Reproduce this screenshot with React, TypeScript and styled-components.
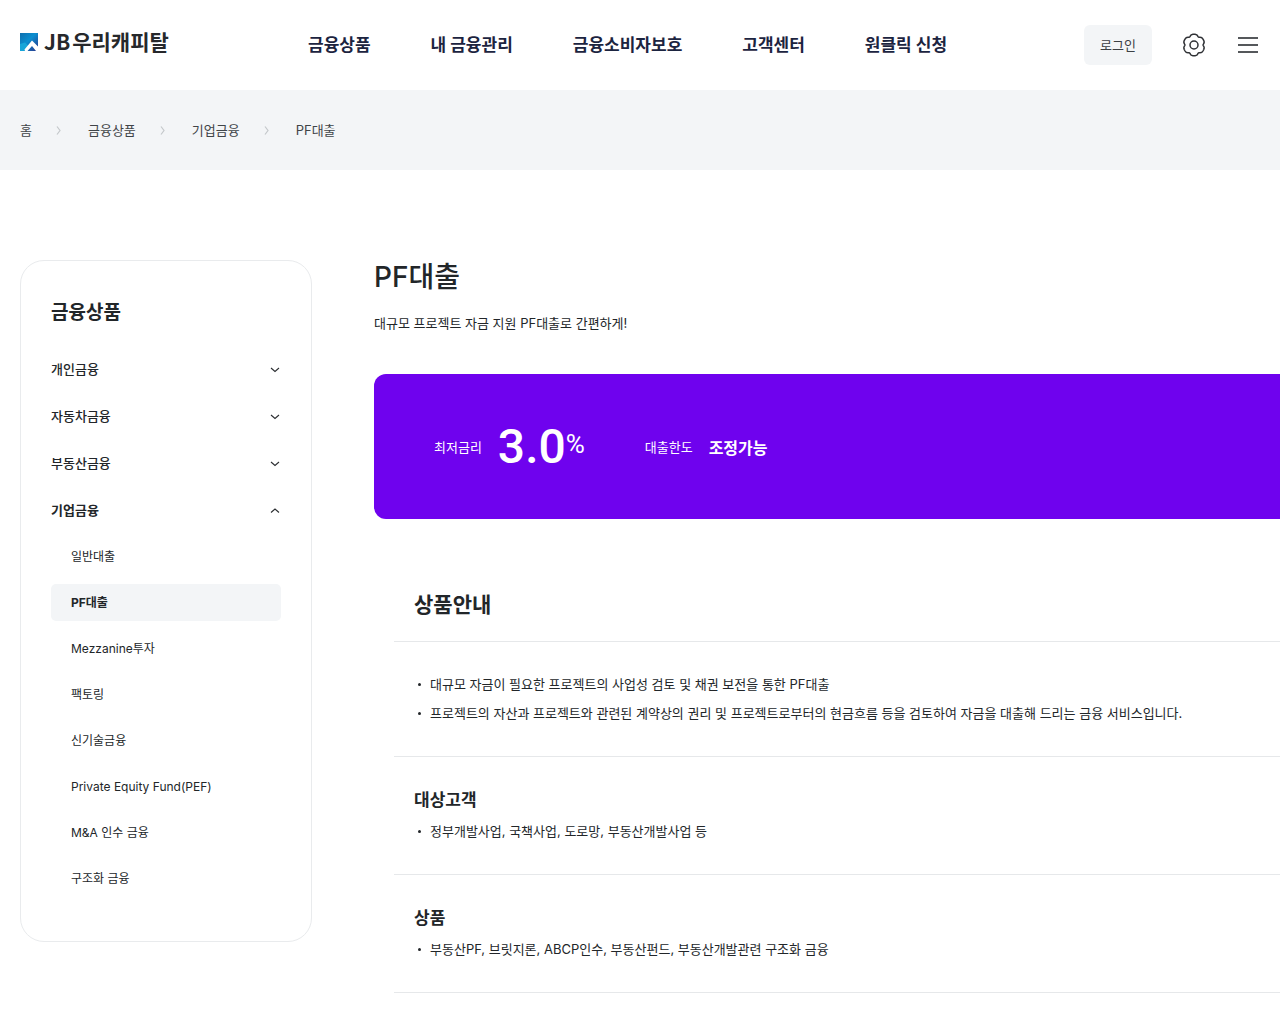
import React, { useState } from "react";
import styled, { createGlobalStyle } from "styled-components";

const GlobalStyle = createGlobalStyle`
  *, *::before, *::after { box-sizing: border-box; }
  body {
    margin: 0;
    background: #fff;
    color: #222629;
    font-family: Inter, "Noto Sans CJK KR", sans-serif;
    font-size: 13px;
    overflow-x: hidden;
  }
  h1, h2, h3, p, ul, ol, dl, dd { margin: 0; padding: 0; }
  ul, ol { list-style: none; }
  a { color: inherit; text-decoration: none; }
  button { border: 0; padding: 0; background: none; color: inherit; font: inherit; cursor: pointer; }
`;

const Header = styled.header`
  display: flex;
  align-items: center;
  height: 90px;
  padding: 0 20px;
`;

const LogoLink = styled.a`
  display: flex;
  align-items: center;
  gap: 6px;
  flex: 0 0 288px;
  padding-bottom: 6px;
  color: #26282b;
  font-size: 21px;
  font-weight: 700;
  line-height: 28px;
`;

const LogoLatin = styled.span`
  margin-right: 2px;
  font-family: "Noto Sans CJK KR", sans-serif;
`;

const GlobalNav = styled.nav`
  flex: 1;
`;

const GlobalNavList = styled.ul`
  display: flex;
  gap: 60px;
  color: #1c2440;
  font-size: 17px;
  font-weight: 700;
  line-height: 24px;
  white-space: nowrap;
`;

const HeaderTools = styled.div`
  display: flex;
  align-items: center;
  gap: 30px;
`;

const LoginButton = styled.button`
  width: 68px;
  height: 40px;
  padding-bottom: 2px;
  border-radius: 6px;
  background: #f3f5f7;
  color: #3c4044;
`;

const IconButton = styled.button`
  display: flex;
  width: 24px;
  height: 24px;
`;

const Breadcrumb = styled.nav`
  display: flex;
  align-items: center;
  height: 80px;
  padding: 0 20px;
  background: #f3f5f7;
  color: #3f4448;
`;

const BreadcrumbList = styled.ol`
  display: flex;
  gap: 24px;
  line-height: 20px;
`;

const BreadcrumbItem = styled.li`
  display: flex;
  align-items: center;
  gap: 24px;
`;

const Main = styled.main`
  display: flex;
  align-items: flex-start;
  gap: 62px;
  padding: 90px 0 60px 20px;
`;

const Sidebar = styled.aside`
  flex: 0 0 292px;
  padding: 38px 30px 44px;
  border: 1px solid #e9ebed;
  border-radius: 24px;
`;

const SidebarTitle = styled.h2`
  margin-bottom: 18px;
  font-size: 19px;
  font-weight: 700;
  line-height: 28px;
`;

const GroupButton = styled.button<{ $open: boolean }>`
  display: flex;
  align-items: center;
  justify-content: space-between;
  width: 100%;
  height: 47px;
  padding-right: 1px;
  font-weight: ${(p) => (p.$open ? 700 : 500)};
`;

const SubList = styled.ul`
  display: grid;
  gap: 9px;
  padding-top: 5px;
`;

const SubLink = styled.a<{ $current: boolean }>`
  display: block;
  padding: 0 20px;
  border-radius: 5px;
  background: ${(p) => (p.$current ? "#f3f5f7" : "transparent")};
  font-size: 12px;
  font-weight: ${(p) => (p.$current ? 700 : 400)};
  line-height: 37px;
`;

const Content = styled.article`
  flex: 1 0 946px;
`;

const PageTitle = styled.h1`
  font-size: 28px;
  font-weight: 500;
  line-height: 34px;
`;

const PageLead = styled.p`
  margin: 19px 0 41px;
  line-height: 20px;
`;

const Banner = styled.dl`
  display: flex;
  align-items: center;
  gap: 60px;
  height: 145px;
  padding: 0 60px;
  border-radius: 12px;
  background: #6f02ee;
  color: #fff;
`;

const BannerItem = styled.div`
  display: flex;
  align-items: center;
  gap: 16px;
`;

const Rate = styled.dd`
  display: flex;
  align-items: center;
  font-family: Roboto, sans-serif;
  font-size: 48px;
  font-weight: 500;
  line-height: 58px;
`;

const Percent = styled.span`
  padding-bottom: 6px;
  font-size: 26px;
  font-weight: 400;
`;

const Limit = styled.dd`
  font-size: 16px;
  font-weight: 700;
`;

const Details = styled.div`
  padding: 71px 20px 0;
`;

const DetailsTitle = styled.h2`
  padding: 0 20px 21px;
  border-bottom: 1px solid #e6e8ea;
  font-size: 21px;
  font-weight: 600;
  line-height: 30px;
`;

const Section = styled.section`
  padding: 28px 20px;
  border-bottom: 1px solid #e6e8ea;
`;

const SectionTitle = styled.h3`
  margin-bottom: 2px;
  font-size: 17px;
  font-weight: 600;
  line-height: 30px;
`;

const BulletItem = styled.li`
  display: flex;
  align-items: center;
  gap: 9px;
  padding-left: 4px;
  line-height: 29px;
  white-space: nowrap;

  &::before {
    content: "";
    width: 3px;
    height: 3px;
    border-radius: 50%;
    background: #222629;
  }
`;

const LogoMark = () => (
  <svg width="18" height="18" viewBox="0 0 18 18" aria-hidden="true">
    <defs>
      <linearGradient id="mark" x1="0" y1="0" x2="1" y2="1">
        <stop offset="0" stopColor="#0f6fae" />
        <stop offset="0.45" stopColor="#0b8fd0" />
        <stop offset="1" stopColor="#29338a" />
      </linearGradient>
    </defs>
    <path d="M0 0h18v18H0z" fill="url(#mark)" />
    <path d="M0 11v7h4.500L9 13.500 5 9.500Z" fill="#17a5d8" />
    <path d="M4.500 16.500 12 7.500 18 13.500V18H16L12 13 7.500 18H5Z" fill="#fff" />
  </svg>
);

/* Six broad lobes with soft valleys between them, one lobe pointing up. */
const gearOutline =
  Array.from({ length: 120 }, (_, i) => {
    const a = (i * Math.PI) / 60;
    const r = 9.1 + 1.6 * (1 - Math.pow(Math.sin(3 * a), 6));
    return `${i ? "L" : "M"}${(12 + r * Math.sin(a)).toFixed(2)} ${(12 - r * Math.cos(a)).toFixed(2)}`;
  }).join("") + "Z";

const GearIcon = () => (
  <svg width="24" height="24" viewBox="0 0 24 24" fill="none" stroke="#303236" strokeWidth="1.5" strokeLinejoin="round" aria-hidden="true">
    <path d={gearOutline} />
    <circle cx="12" cy="12" r="4" />
  </svg>
);

const MenuIcon = () => (
  <svg width="24" height="24" viewBox="0 0 24 24" stroke="#55585b" strokeWidth="2" aria-hidden="true">
    <path d="M2 5h20M2 12h20M2 19h20" />
  </svg>
);

const Separator = () => (
  <svg width="8" height="10" viewBox="0 0 8 10" fill="none" stroke="#c4c8cb" strokeWidth="1.2" aria-hidden="true">
    <path d="M1 1.500l3 4-3 4" />
  </svg>
);

const Chevron = ({ open }: { open: boolean }) => (
  <svg width="10" height="8" viewBox="0 0 10 8" fill="none" stroke="#2b2e31" strokeWidth="1.1" aria-hidden="true">
    <path d={open ? "M1 6.500 5 3 9 6.500" : "M1 3 5 6.500 9 3"} />
  </svg>
);

const menus = ["금융상품", "내 금융관리", "금융소비자보호", "고객센터", "원클릭 신청"];
const trail = ["홈", "금융상품", "기업금융", "PF대출"];
const groups: { name: string; items: string[] }[] = [
  { name: "개인금융", items: [] },
  { name: "자동차금융", items: [] },
  { name: "부동산금융", items: [] },
  {
    name: "기업금융",
    items: ["일반대출", "PF대출", "Mezzanine투자", "팩토링", "신기술금융", "Private Equity Fund(PEF)", "M&A 인수 금융", "구조화 금융"],
  },
];
const sections: { title?: string; items: string[] }[] = [
  {
    items: [
      "대규모 자금이 필요한 프로젝트의 사업성 검토 및 채권 보전을 통한 PF대출",
      "프로젝트의 자산과 프로젝트와 관련된 계약상의 권리 및 프로젝트로부터의 현금흐름 등을 검토하여 자금을 대출해 드리는 금융 서비스입니다.",
    ],
  },
  { title: "대상고객", items: ["정부개발사업, 국책사업, 도로망, 부동산개발사업 등"] },
  { title: "상품", items: ["부동산PF, 브릿지론, ABCP인수, 부동산펀드, 부동산개발관련 구조화 금융"] },
];

export default function App() {
  const [openGroup, setOpenGroup] = useState("기업금융");

  return (
    <>
      <GlobalStyle />
      <Header>
        <LogoLink href="#">
          <LogoMark />
          <span>
            <LogoLatin>JB</LogoLatin>우리캐피탈
          </span>
        </LogoLink>
        <GlobalNav>
          <GlobalNavList>
            {menus.map((m) => (
              <li key={m}>
                <a href="#">{m}</a>
              </li>
            ))}
          </GlobalNavList>
        </GlobalNav>
        <HeaderTools>
          <LoginButton type="button">로그인</LoginButton>
          <IconButton type="button" aria-label="설정">
            <GearIcon />
          </IconButton>
          <IconButton type="button" aria-label="전체메뉴">
            <MenuIcon />
          </IconButton>
        </HeaderTools>
      </Header>

      <Breadcrumb>
        <BreadcrumbList>
          {trail.map((t, i) => (
            <BreadcrumbItem key={t}>
              <a href="#">{t}</a>
              {i < trail.length - 1 && <Separator />}
            </BreadcrumbItem>
          ))}
        </BreadcrumbList>
      </Breadcrumb>

      <Main>
        <Sidebar>
          <SidebarTitle>금융상품</SidebarTitle>
          <ul>
            {groups.map((g) => {
              const open = g.name === openGroup;
              return (
                <li key={g.name}>
                  <GroupButton type="button" $open={open} aria-expanded={open} onClick={() => setOpenGroup(open ? "" : g.name)}>
                    {g.name}
                    <Chevron open={open} />
                  </GroupButton>
                  {open && g.items.length > 0 && (
                    <SubList>
                      {g.items.map((item) => (
                        <li key={item}>
                          <SubLink href="#" $current={item === "PF대출"}>
                            {item}
                          </SubLink>
                        </li>
                      ))}
                    </SubList>
                  )}
                </li>
              );
            })}
          </ul>
        </Sidebar>

        <Content>
          <PageTitle>PF대출</PageTitle>
          <PageLead>대규모 프로젝트 자금 지원 PF대출로 간편하게!</PageLead>
          <Banner>
            <BannerItem>
              <dt>최저금리</dt>
              <Rate>
                3.0<Percent>%</Percent>
              </Rate>
            </BannerItem>
            <BannerItem>
              <dt>대출한도</dt>
              <Limit>조정가능</Limit>
            </BannerItem>
          </Banner>
          <Details>
            <DetailsTitle>상품안내</DetailsTitle>
            {sections.map((s, i) => (
              <Section key={i}>
                {s.title && <SectionTitle>{s.title}</SectionTitle>}
                <ul>
                  {s.items.map((t) => (
                    <BulletItem key={t}>{t}</BulletItem>
                  ))}
                </ul>
              </Section>
            ))}
          </Details>
        </Content>
      </Main>
    </>
  );
}
